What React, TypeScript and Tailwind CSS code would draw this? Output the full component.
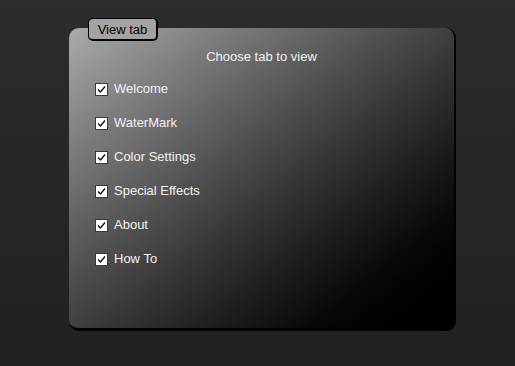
import React from "react";

const items = ["Welcome", "WaterMark", "Color Settings", "Special Effects", "About", "How To"];

function Check() {
  return (
    <span className="w-[13px] h-[13px] bg-white border border-[#3a3a3a] flex items-center justify-center shrink-0">
      <svg width="11" height="11" viewBox="0 0 11 11">
        <path d="M2 5.5 L4.5 8 L9 2.5" stroke="#111" strokeWidth="1.4" fill="none" />
      </svg>
    </span>
  );
}

export default function App() {
  return (
    <div
      className="w-[515px] h-[366px] bg-gradient-to-b from-[#2c2c2c] to-[#212121] pl-[69px] pt-[28px]"
      style={{ fontFamily: '"Liberation Sans", Arial, sans-serif' }}
    >
      <div className="relative w-[387px] h-[303px] rounded-[10px] bg-gradient-to-br from-[#ababab] to-[#000] border-r-[2px] border-b-[3px] border-black">
        <div className="absolute left-[19px] top-[-10px] w-[70px] h-[23px] rounded-[5px] bg-[#a3a3a3] border border-black border-r-[2px] border-b-[2px] flex items-center justify-center pt-[2px] text-[13px] text-black">
          View tab
        </div>
        <div className="pt-[21px] text-center text-[13px] text-[#f2f2f2] leading-[16px]">Choose tab to view</div>
        <div className="flex flex-col gap-[18px] pl-[26px] pt-[16px]">
          {items.map((t) => (
            <div key={t} className="flex items-center gap-[6px] h-[16px] text-[13px] text-[#f2f2f2]">
              <Check />
              <span>{t}</span>
            </div>
          ))}
        </div>
      </div>
    </div>
  );
}
